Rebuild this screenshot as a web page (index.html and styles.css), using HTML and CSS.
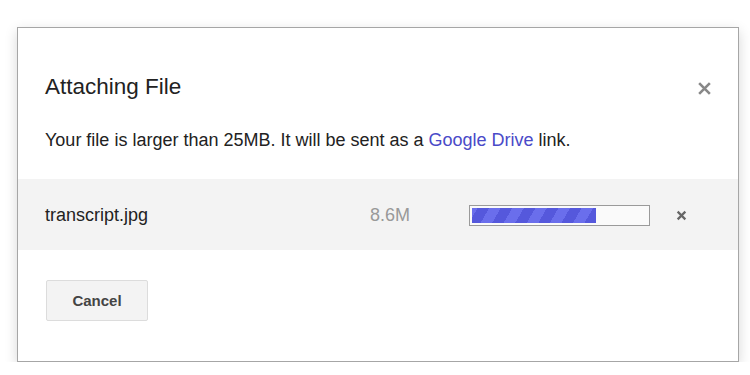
FILE: index.html
```html
<!DOCTYPE html>
<html lang="en">
<head>
  <meta charset="UTF-8">
  <title>Attaching File</title>
  <link rel="stylesheet" href="styles.css">
</head>
<body>
  <div class="dialog">
    <button class="close" title="Close">
      <svg viewBox="0 0 14 14"><path d="M2 2 12 12M12 2 2 12" stroke="currentColor" stroke-width="2.4" fill="none"/></svg>
    </button>
    <h1 class="title">Attaching File</h1>
    <p class="note">Your file is larger than 25MB. It will be sent as a <a href="#">Google Drive</a> link.</p>

    <div class="file-row">
      <span class="name">transcript.jpg</span>
      <span class="size">8.6M</span>
      <div class="progress"><div class="fill" style="width:71%"></div></div>
      <button class="remove" title="Remove">
        <svg viewBox="0 0 10 10"><path d="M1.5 1.5 8.5 8.5M8.5 1.5 1.5 8.5" stroke="currentColor" stroke-width="2" fill="none"/></svg>
      </button>
    </div>

    <div class="actions">
      <button class="cancel">Cancel</button>
    </div>
  </div>
</body>
</html>
```

FILE: styles.css
```css
*{box-sizing:border-box;margin:0;padding:0}
body{font-family:'Liberation Sans',Arial,sans-serif;background:#fff;color:#222;padding:27px 0 0 17px}
.dialog{position:relative;width:722px;height:335px;background:#fff;border:1px solid #a6a6a6;box-shadow:0 4px 12px rgba(0,0,0,.16);padding-top:46px}
.close{position:absolute;top:52px;right:25px;width:16px;height:16px;border:none;background:none;color:#888;cursor:pointer}
.close svg{width:15px;height:15px;display:block}
.title{font-size:22.5px;font-weight:400;line-height:26px;padding-left:27px;color:#222}
.note{font-size:18px;line-height:22px;margin-top:29px;padding-left:27px;color:#222}
.note a{color:#4a4ac8;text-decoration:none}
.file-row{display:flex;align-items:center;height:71px;margin-top:28px;padding:2px 0 0 27px;background:#f3f3f3;font-size:18px}
.name{width:325px;color:#222}
.size{width:99px;color:#999}
.progress{width:181px;height:21px;border:1px solid #9a9a9a;background:#fafafa;padding:2px}
.fill{height:100%;background:repeating-linear-gradient(-60deg,#5558dc 0 10px,#6a6eec 10px 20px)}
.remove{margin-left:26px;width:12px;height:12px;border:none;background:none;color:#666;cursor:pointer}
.remove svg{width:11px;height:11px;display:block}
.actions{padding:30px 0 0 28px}
.cancel{width:102px;height:41px;background:#f3f3f3;border:1px solid #dcdcdc;border-radius:2px;font-family:inherit;font-weight:700;font-size:15px;color:#444;cursor:pointer}
```
